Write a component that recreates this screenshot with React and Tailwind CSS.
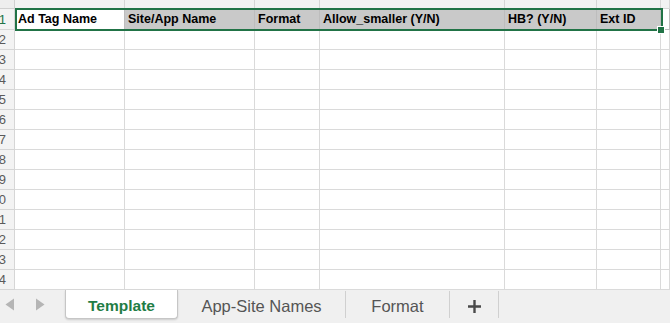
const columns = [
  { w: 'w-[110px]', label: 'Ad Tag Name', bg: 'bg-white' },
  { w: 'w-[130px]', label: 'Site/App Name', bg: 'bg-[#c9c9c9]' },
  { w: 'w-[65px]', label: 'Format', bg: 'bg-[#c9c9c9]' },
  { w: 'w-[185px]', label: 'Allow_smaller (Y/N)', bg: 'bg-[#c9c9c9]' },
  { w: 'w-[92px]', label: 'HB? (Y/N)', bg: 'bg-[#c9c9c9]' },
  { w: 'w-[64px]', label: 'Ext ID', bg: 'bg-[#c9c9c9]' },
  { w: 'w-[9px]', label: '', bg: 'bg-white' },
];

const rows = [2, 3, 4, 5, 6, 7, 8, 9, 10, 11, 12, 13, 14];

const RowHeader = ({ n, active }) => (
  <div className="w-[15px] shrink-0 bg-[#f3f3f3] border-r border-b border-[#d6d6d6] overflow-hidden flex justify-end items-center">
    <span className={`pr-[9px] -mr-[1px] text-[13px] leading-none ${active ? 'text-[#217346]' : 'text-[#5a5a5a]'}`}>
      {n}
    </span>
  </div>
);

const App = () => {
  return (
    <div className="relative w-[670px] h-[323px] overflow-hidden bg-white flex flex-col" style={{ fontFamily: '"Liberation Sans", Arial, sans-serif' }}>
      {/* column header strip */}
      <div className="flex h-[9px] shrink-0">
        <div className="w-[15px] shrink-0 bg-[#eeeeee] border-r border-b border-[#d0d0d0]" />
        {columns.map((c, i) => (
          <div key={i} className={`${c.w} shrink-0 bg-[#f2f2f2] border-r border-b border-[#d6d6d6]`} />
        ))}
      </div>

      {/* header row */}
      <div className="flex h-[21px] shrink-0">
        <RowHeader n={1} active />
        {columns.map((c, i) => (
          <div key={i} className={`${c.w} shrink-0 ${c.bg} border-r border-b border-[#bdbdbd] flex items-center pl-[3px] pt-[1px] overflow-hidden whitespace-nowrap`}>
            <span className="text-[12.5px] font-bold text-black">{c.label}</span>
          </div>
        ))}
      </div>

      {rows.map((n) => (
        <div key={n} className="flex h-[20px] shrink-0">
          <RowHeader n={n} />
          {columns.map((c, i) => (
            <div key={i} className={`${c.w} shrink-0 border-r border-b border-[#dadada]`} />
          ))}
        </div>
      ))}

      {/* sheet tabs */}
      <div className="flex-1 flex bg-[#f0f0f0]">
        <div className="w-[65px] shrink-0 flex items-center gap-[20px] pl-[5px] pb-[4px]">
          <svg width="10" height="13" viewBox="0 0 10 13"><path d="M9 0.5 L0.5 6.5 L9 12.5 Z" fill="#b5b5b5" /></svg>
          <svg width="10" height="13" viewBox="0 0 10 13"><path d="M1 0.5 L9.5 6.5 L1 12.5 Z" fill="#b5b5b5" /></svg>
        </div>
        <div className="w-[113px] shrink-0 h-[29px] pt-[3px] bg-white border-x border-b border-[#c6c6c6] rounded-b-[4px] shadow-[0_1px_2px_rgba(0,0,0,0.15)] flex items-center justify-center">
          <span className="text-[15.5px] font-bold text-[#1f7d45]">Template</span>
        </div>
        <div className="w-[168px] shrink-0 h-[27px] mt-[1px] pt-[3px] border-r border-[#d0d0d0] flex items-center justify-center">
          <span className="text-[16.5px] text-[#555555]">App-Site Names</span>
        </div>
        <div className="w-[104px] shrink-0 h-[27px] mt-[1px] pt-[3px] border-r border-[#d0d0d0] flex items-center justify-center">
          <span className="text-[16.5px] text-[#555555]">Format</span>
        </div>
        <div className="w-[49px] shrink-0 h-[27px] mt-[1px] pt-[3px] border-r border-[#d0d0d0] flex items-center justify-center">
          <svg width="13" height="13" viewBox="0 0 13 13"><path d="M6.5 0 V13 M0 6.5 H13" stroke="#4a4a4a" strokeWidth="2.4" /></svg>
        </div>
      </div>

      {/* selection overlay on row 1 */}
      <div className="absolute left-[15px] top-[8px] w-[648px] h-[23px] border-2 border-[#217346] pointer-events-none" />
      <div className="absolute left-[657px] top-[26px] w-[8px] h-[8px] bg-[#217346] border border-white" />
    </div>
  );
};

export default App;
